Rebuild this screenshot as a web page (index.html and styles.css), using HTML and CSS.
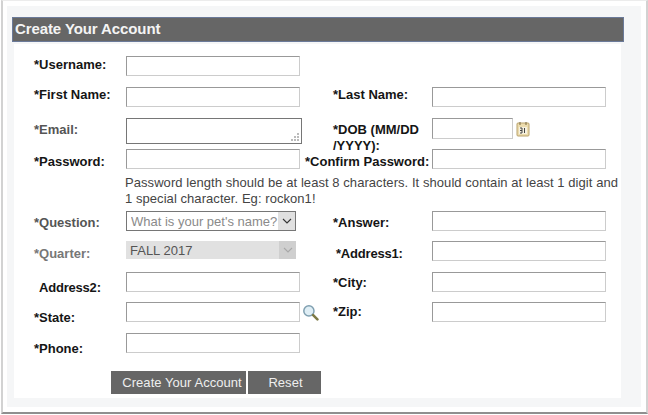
FILE: index.html
```html
<!DOCTYPE html>
<html lang="en">
<head>
  <meta charset="UTF-8" />
  <title>Create Your Account</title>
  <link rel="stylesheet" href="styles.css">
</head>
<body>
  <div class="frame">
    <div class="panel">
      <h1 class="title">Create Your Account</h1>
      <form class="form">
        <div class="row">
          <label class="lbl pad-1">*Username:</label>
          <input class="field" type="text" />
        </div>
        <div class="row row-name">
          <label class="lbl">*First Name:</label>
          <input class="field" type="text" />
          <label class="lbl">*Last Name:</label>
          <input class="field" type="text" />
        </div>
        <div class="row row-email">
          <label class="lbl lbl-muted pad-4">*Email:</label>
          <div class="area-wrap">
            <textarea class="area"></textarea>
            <svg class="grip" width="8" height="8" viewBox="0 0 8 8">
              <path d="M6 0h2v2H6zM3 3h2v2H3zM6 3h2v2H6zM0 6h2v2H0zM3 6h2v2H3zM6 6h2v2H6z" fill="#bbb" />
            </svg>
          </div>
          <label class="lbl lbl-dob pad-4">*DOB (MM/DD /YYYY):</label>
          <div class="dob">
            <input class="field field-dob" type="text" />
            <svg class="cal" width="14" height="16" viewBox="0 0 14 16">
              <rect x="1" y="2" width="12" height="13" rx="1" fill="#ecdcae" stroke="#b9a26c" />
              <rect x="3" y="6" width="8" height="7" fill="#f6f1df" />
              <path d="M4 1v3M10 1v3" stroke="#8a7a50" stroke-width="1.200" />
              <path d="M4 7h2v5H4M4 9.500h2M8.500 7v5" fill="none" stroke="#444" />
            </svg>
          </div>
        </div>
        <div class="row">
          <label class="lbl pad-5">*Password:</label>
          <input class="field" type="password" />
          <label class="lbl lbl-confirm pad-5">*Confirm Password:</label>
          <input class="field" type="password" />
        </div>
        <p class="hint">Password length should be at least 8 characters. It should contain at least 1 digit and 1 special character. Eg: rockon1!</p>
        <div class="row row-question">
          <label class="lbl lbl-muted pad-4">*Question:</label>
          <div class="sel-wrap">
            <select class="sel"><option>What is your pet's name?</option></select>
            <span class="sel-btn">
              <svg width="10" height="6" viewBox="0 0 10 6"><path d="M1 1l4 4 4-4" fill="none" stroke="#333" stroke-width="1.100" /></svg>
            </span>
          </div>
          <label class="lbl pad-4">*Answer:</label>
          <input class="field" type="text" />
        </div>
        <div class="row row-quarter">
          <label class="lbl lbl-off pad-5">*Quarter:</label>
          <div class="sel-wrap">
            <select class="sel sel-off" disabled><option>FALL 2017</option></select>
            <span class="sel-btn sel-btn-off">
              <svg width="10" height="6" viewBox="0 0 10 6"><path d="M1 1l4 4 4-4" fill="none" stroke="#a8a8a8" stroke-width="1.100" /></svg>
            </span>
          </div>
          <label class="lbl lbl-addr1 pad-5">*Address1:</label>
          <input class="field" type="text" />
        </div>
        <div class="row row-addr">
          <label class="lbl lbl-addr2 pad-8">Address2:</label>
          <input class="field" type="text" />
          <label class="lbl pad-3">*City:</label>
          <input class="field" type="text" />
        </div>
        <div class="row row-state">
          <label class="lbl pad-8">*State:</label>
          <div class="state">
            <input class="field" type="text" />
            <svg class="lens" width="17" height="17" viewBox="0 0 16 16">
              <circle cx="6.500" cy="6.500" r="4.800" fill="#dfeef5" stroke="#7f9fb0" stroke-width="1.400" />
              <path d="M10.500 10.500l4 4" stroke="#7d7a45" stroke-width="2.400" stroke-linecap="round" />
            </svg>
          </div>
          <label class="lbl pad-2">*Zip:</label>
          <input class="field" type="text" />
        </div>
        <div class="row row-phone">
          <label class="lbl pad-8">*Phone:</label>
          <input class="field" type="text" />
        </div>
        <div class="actions">
          <button class="btn btn-create" type="button">Create Your Account</button>
          <button class="btn btn-reset" type="button">Reset</button>
        </div>
      </form>
    </div>
  </div>
</body>
</html>
```

FILE: styles.css
```css
body {
  margin: 0;
  background: #fff;
  font-family: "Liberation Sans", Arial, sans-serif;
  overflow: hidden;
}
.frame {
  width: 647px;
  height: 414px;
  box-sizing: border-box;
  margin-left: 1px;
  padding: 5px 5px 5px 4px;
  border-top: 1px solid #ececec;
  border-left: 2px solid #d2d2d2;
  border-right: 2px solid #d2d2d2;
  border-bottom: 2px solid #8f8f8f;
}
.panel {
  width: 634px;
  height: 401px;
  box-sizing: border-box;
  padding: 11px 17px 9px 5px;
  background: #f5f6f7;
}
.title {
  margin: 0;
  height: 25px;
  box-sizing: border-box;
  padding-left: 2px;
  background: #666;
  border: 1px solid #6b7a99;
  color: #f4f4f4;
  font-size: 15px;
  line-height: 22px;
  font-weight: bold;
  letter-spacing: -0.1px;
}
.form {
  width: 607px;
  height: 354px;
  box-sizing: border-box;
  margin: 2px 0 0 2px;
  padding: 12px 0 0 20px;
  background: #fff;
}
.row {
  display: grid;
  grid-template-columns: 92px 207px 99px 174px;
  align-items: start;
  height: 20px;
}
.row-name { margin-top: 11px; }
.row-email { margin-top: 11px; height: 31px; }
.row-question { margin-top: 4px; }
.row-quarter { margin-top: 10px; }
.row-addr { margin-top: 11px; }
.row-state { margin-top: 10px; }
.row-phone { margin-top: 11px; }

.lbl {
  font-size: 13px;
  line-height: 16px;
  font-weight: bold;
  color: #151515;
}
.lbl-muted { color: #555; }
.lbl-off { color: #777; }
.lbl-dob { width: 92px; }
.lbl-confirm { margin-left: -28px; white-space: nowrap; }
.lbl-addr1 { padding-left: 3px; letter-spacing: -0.2px; }
.lbl-addr2 { padding-left: 5px; letter-spacing: -0.2px; }
.pad-1 { padding-top: 1px; }
.pad-2 { padding-top: 2px; }
.pad-3 { padding-top: 3px; }
.pad-4 { padding-top: 4px; }
.pad-5 { padding-top: 5px; }
.pad-8 { padding-top: 8px; }

.field {
  width: 174px;
  height: 20px;
  box-sizing: border-box;
  margin: 0;
  padding: 0 4px;
  background: #fff;
  border: 1px solid #ccc;
  border-top-color: #999;
  border-left-color: #999;
}
.area-wrap {
  position: relative;
  width: 176px;
}
.area {
  display: block;
  width: 176px;
  height: 26px;
  box-sizing: border-box;
  margin: 0;
  border: 1px solid #767676;
  outline: 0;
  resize: none;
  background: #fff;
}
.grip {
  position: absolute;
  right: 3px;
  bottom: 3px;
}
.dob, .state {
  display: flex;
  align-items: center;
  gap: 3px;
}
.field-dob { width: 81px; height: 21px; }
.state { gap: 2px; }

.hint {
  width: 496px;
  margin: 6px 0 0 91px;
  font-size: 13px;
  line-height: 16px;
  letter-spacing: 0.06px;
  color: #444;
}

.sel-wrap {
  position: relative;
  width: 170px;
}
.sel {
  display: block;
  width: 170px;
  height: 20px;
  box-sizing: border-box;
  margin: 0;
  padding: 0 0 0 4px;
  appearance: none;
  border: 1px solid #767676;
  border-radius: 0;
  background: #fff;
  color: #8a8a8a;
  font-family: "Liberation Sans", Arial, sans-serif;
  font-size: 13px;
}
.sel-off {
  height: 18px;
  border: 0;
  background: #e1e1e1;
  color: #555;
  opacity: 1;
}
.sel-btn {
  position: absolute;
  top: 1px;
  right: 1px;
  width: 17px;
  height: 18px;
  display: flex;
  align-items: center;
  justify-content: center;
  background: #e0e0e0;
}
.sel-btn-off {
  top: 0;
  right: 0;
  background: #cfcfcf;
}

.actions {
  display: flex;
  gap: 2px;
  margin: 18px 0 0 77px;
}
.btn {
  height: 23px;
  padding: 0;
  border: 0;
  background: #666;
  color: #eee;
  font-family: "Liberation Sans", Arial, sans-serif;
  font-size: 13px;
  letter-spacing: 0.05px;
}
.btn-create { width: 135px; padding-left: 7px; }
.btn-reset { width: 73px; padding-left: 2px; }
```
